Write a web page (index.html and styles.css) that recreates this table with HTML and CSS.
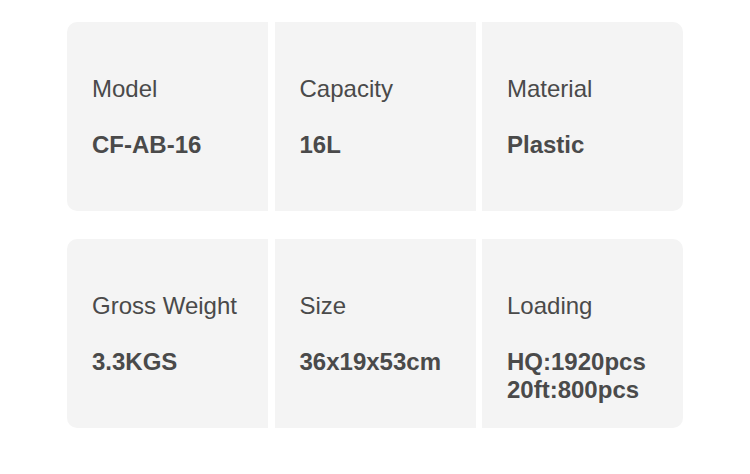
FILE: index.html
```html
<!DOCTYPE html>
<html>
<head>
<meta charset="utf-8">
<link rel="stylesheet" href="styles.css">
</head>
<body>
<div class="specs">
  <div class="row">
    <div class="cell"><div class="label">Model</div><div class="value">CF-AB-16</div></div>
    <div class="cell"><div class="label">Capacity</div><div class="value">16L</div></div>
    <div class="cell"><div class="label">Material</div><div class="value">Plastic</div></div>
  </div>
  <div class="row">
    <div class="cell"><div class="label">Gross Weight</div><div class="value">3.3KGS</div></div>
    <div class="cell"><div class="label">Size</div><div class="value">36x19x53cm</div></div>
    <div class="cell"><div class="label">Loading</div><div class="value">HQ:1920pcs<br>20ft:800pcs</div></div>
  </div>
</div>
</body>
</html>
```
FILE: styles.css
```css
html, body {
  margin: 0;
  padding: 0;
  background: #ffffff;
}
body {
  font-family: "Liberation Sans", Arial, sans-serif;
}
.specs {
  padding: 22px 0 0 67px;
  display: flex;
  flex-direction: column;
  gap: 28px;
}
.row {
  display: grid;
  grid-template-columns: 201px 201px 201px;
  column-gap: 6.5px;
  height: 189px;
}
.cell {
  background: #f4f4f4;
  padding: 53px 0 0 25px;
  box-sizing: border-box;
}
.cell:first-child {
  border-radius: 10px 0 0 10px;
}
.cell:last-child {
  border-radius: 0 10px 10px 0;
}
.label {
  font-size: 24px;
  line-height: 28px;
  color: #4a4a4a;
}
.value {
  margin-top: 28px;
  font-size: 24px;
  line-height: 28px;
  font-weight: bold;
  color: #4a4a4a;
}
```
